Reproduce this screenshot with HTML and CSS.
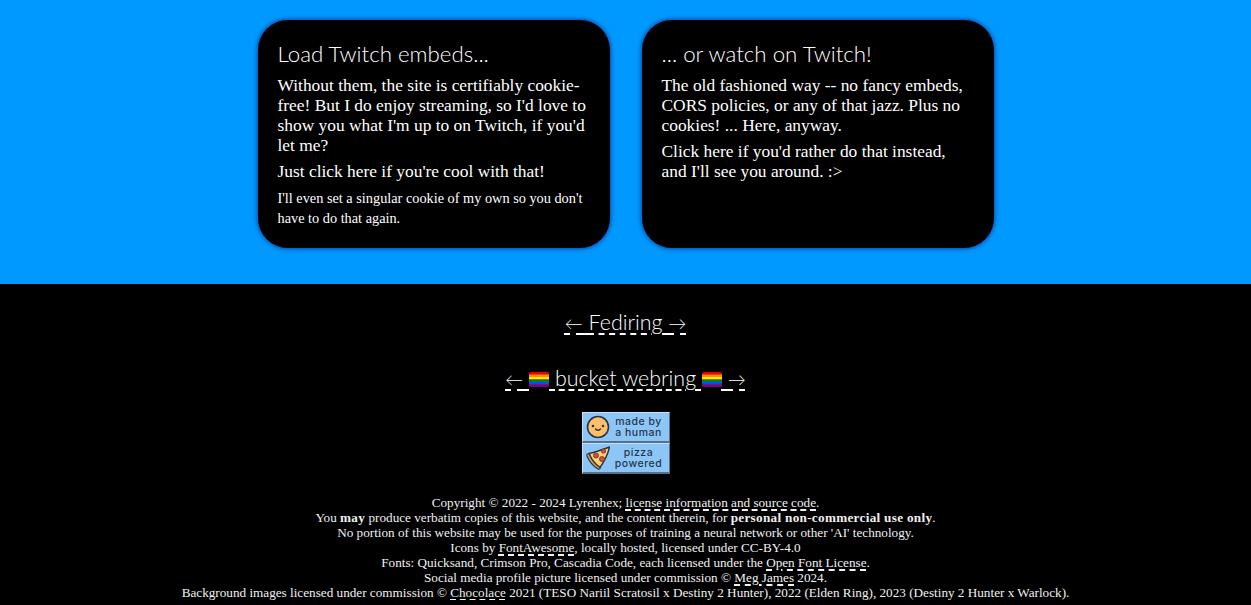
FILE: index.html
```html
<!DOCTYPE html>
<html lang="en">
<head>
    <meta charset="UTF-8">
    <meta name="viewport" content="width=device-width, initial-scale=1.0">
    <title>Lyrenhex</title>
    <link rel="stylesheet" href="styles.css">
</head>
<body>
    <main class="embed-section">
        <section class="card">
            <h2>Load Twitch embeds...</h2>
            <p>Without them, the site is certifiably cookie-free! But I do enjoy streaming, so I'd love to show you what I'm up to on Twitch, if you'd let me?</p>
            <p>Just click here if you're cool with that!</p>
            <p class="small">I'll even set a singular cookie of my own so you don't have to do that again.</p>
        </section>
        <section class="card">
            <h2>... or watch on Twitch!</h2>
            <p>The old fashioned way -- no fancy embeds, CORS policies, or any of that jazz. Plus no cookies! ... Here, anyway.</p>
            <p>Click here if you'd rather do that instead, and I'll see you around. :&gt;</p>
        </section>
    </main>
    <footer class="site-footer">
        <div class="ring"><a href="#"><span class="arrow">←</span> </a><a href="#">Fediring </a><a href="#"><span class="arrow">→</span></a></div>
        <div class="ring ring-second">
            <a href="#"><span class="arrow">←</span> </a><a href="#"><svg class="flag" viewBox="0 0 20 15"><rect width="20" height="15" rx="2" fill="#e40303"/><rect y="2.5" width="20" height="2.5" fill="#ff8c00"/><rect y="5" width="20" height="2.5" fill="#ffed00"/><rect y="7.5" width="20" height="2.5" fill="#008026"/><rect y="10" width="20" height="2.5" fill="#004dff"/><path d="M0 12.5h20V13a2 2 0 0 1-2 2H2a2 2 0 0 1-2-2z" fill="#750787"/></svg> bucket webring <svg class="flag" viewBox="0 0 20 15"><rect width="20" height="15" rx="2" fill="#e40303"/><rect y="2.5" width="20" height="2.5" fill="#ff8c00"/><rect y="5" width="20" height="2.5" fill="#ffed00"/><rect y="7.5" width="20" height="2.5" fill="#008026"/><rect y="10" width="20" height="2.5" fill="#004dff"/><path d="M0 12.5h20V13a2 2 0 0 1-2 2H2a2 2 0 0 1-2-2z" fill="#750787"/></svg> </a><a href="#"><span class="arrow">→</span></a>
        </div>
        <div class="badges">
            <div class="badge">
                <svg class="badge-icon" viewBox="0 0 24 24"><circle cx="12" cy="12" r="10.500" fill="#ffbf69" stroke="#26364a" stroke-width="1.600"/><circle cx="7" cy="11" r="1.300" fill="#26364a"/><circle cx="17" cy="11" r="1.300" fill="#26364a"/><path d="M9.500 14q2.500 2.500 5 0" fill="none" stroke="#26364a" stroke-width="1.400" stroke-linecap="round"/></svg>
                <span>made by<br>a human</span>
            </div>
            <div class="badge">
                <svg class="badge-icon" viewBox="0 0 24 24"><path d="M3 7.500C10 6 17 3.500 23.500 1 22 8 18.500 15 14 21.500 10 19 5.500 13.500 3 7.500z" fill="#ffd166" stroke="#26364a" stroke-width="1.400" stroke-linejoin="round"/><path d="M3 7.500C1.500 7.500.5 8.500 1 10c2 5 6 10 11 13 1.500.5 2.500-.5 2-1.500C9.500 18.500 5 13 3 7.500z" fill="#e09a4a" stroke="#26364a" stroke-width="1.200" stroke-linejoin="round"/><circle cx="10" cy="9.500" r="2.600" fill="#e0453a" stroke="#26364a" stroke-width=".6"/><circle cx="17.500" cy="5" r="2.200" fill="#e0453a" stroke="#26364a" stroke-width=".6"/><circle cx="16" cy="13" r="2.600" fill="#e0453a" stroke="#26364a" stroke-width=".6"/></svg>
                <span>pizza<br>powered</span>
            </div>
        </div>
        <div class="legal">
            Copyright © 2022 - 2024 Lyrenhex; <a href="#">license information and source code</a>.<br>
            You <strong>may</strong> produce verbatim copies of this website, and the content therein, for <strong>personal non-commercial use only</strong>.<br>
            No portion of this website may be used for the purposes of training a neural network or other 'AI' technology.<br>
            Icons by <a href="#">FontAwesome</a>, locally hosted, licensed under CC-BY-4.0<br>
            Fonts: Quicksand, Crimson Pro, Cascadia Code, each licensed under the <a href="#">Open Font License</a>.<br>
            Social media profile picture licensed under commission © <a href="#">Meg James</a> 2024.<br>
            Background images licensed under commission © <a href="#">Chocolace</a> 2021 (TESO Nariil Scratosil x Destiny 2 Hunter), 2022 (Elden Ring), 2023 (Destiny 2 Hunter x Warlock).
        </div>
    </footer>
</body>
</html>
```

FILE: styles.css
```css
html, body {
    margin: 0;
    padding: 0;
}

body {
    background-color: #000000;
    color: #ffffff;
    font-family: "Liberation Serif", serif;
}

a {
    color: inherit;
    text-decoration: underline dashed;
}

.embed-section {
    display: flex;
    justify-content: center;
    gap: 32px;
    height: 284px;
    padding: 20px 0 36px;
    box-sizing: border-box;
    background-color: #0099ff;
}

.card {
    width: 352px;
    padding: 20px;
    box-sizing: border-box;
    background-color: #000000;
    border-radius: 30px;
    box-shadow: 0 0 4px 1px #0a45a8;
    font-size: 17.4px;
    line-height: 20px;
}

.card h2 {
    margin: 0 0 8px;
    font-family: Lato, sans-serif;
    font-weight: 300;
    font-size: 22.3px;
    line-height: 27px;
}

.card p {
    margin: 0 0 6px;
}

.card .small {
    font-size: 14.3px;
    margin-top: 7px;
}

.site-footer {
    display: flex;
    flex-direction: column;
    align-items: center;
    text-align: center;
}

.ring {
    margin-top: 23px;
    font-family: Lato, sans-serif;
    font-weight: 300;
    font-size: 21.4px;
    line-height: 30px;
}

.ring a {
    text-decoration-thickness: 2px;
    text-underline-offset: 3px;
}

.ring .arrow {
    font-size: 18px;
}

.ring-second {
    margin-top: 25px;
}

.flag {
    width: 20px;
    height: 15px;
    vertical-align: -1px;
}

.badges {
    display: flex;
    flex-direction: column;
    margin-top: 18px;
}

.badge {
    display: flex;
    align-items: center;
    gap: 2px;
    width: 88px;
    height: 31px;
    padding: 0 3px;
    box-sizing: border-box;
    background-color: #8cc6f7;
    border: 1px solid #c4e2fb;
    border-right-color: #54708c;
    border-bottom: 2px solid #54708c;
    color: #26364a;
    font-family: Inter, sans-serif;
    font-weight: 500;
    font-size: 10.5px;
    letter-spacing: .5px;
    line-height: 11px;
}

.badge-icon {
    width: 24px;
    height: 24px;
    flex: none;
}

.badge span {
    flex: 1;
}

.legal {
    margin-top: 21px;
    font-size: 13.2px;
    line-height: 15px;
    color: #f0f0f0;
}

.legal strong {
    letter-spacing: .3px;
}

.legal a {
    text-decoration-thickness: 1.5px;
    text-underline-offset: 2px;
}
```
